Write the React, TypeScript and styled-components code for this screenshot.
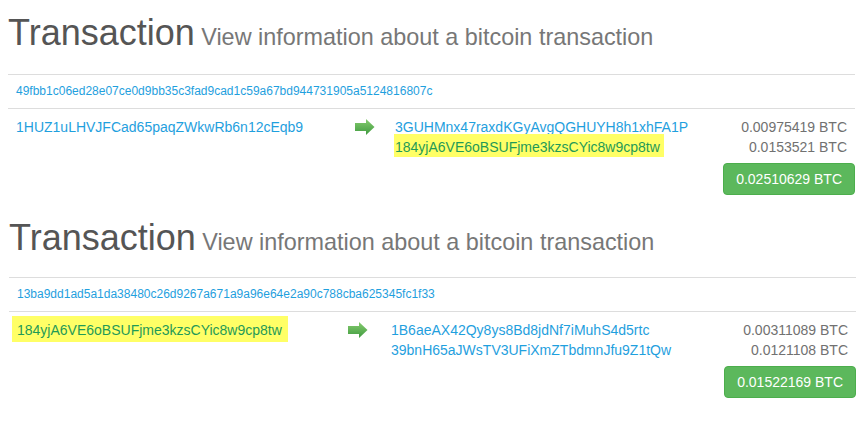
import styled, { createGlobalStyle } from "styled-components";

const GlobalStyle = createGlobalStyle`
  body {
    margin: 0;
    background: #fff;
    font-family: "Liberation Sans", Arial, Helvetica, sans-serif;
    font-size: 14px;
    line-height: 20px;
    color: #333;
  }
`;

const Page = styled.div`
  display: flex;
  flex-direction: column;
  padding-top: 13px;
`;

const Section = styled.section<{ $shift: number; $top: number }>`
  display: flex;
  flex-direction: column;
  width: 847px;
  margin-left: ${(p) => 8 + p.$shift}px;
  margin-top: ${(p) => p.$top}px;
`;

const Title = styled.h1<{ $gap: number }>`
  margin: 0 0 ${(p) => p.$gap}px;
  font-size: 36px;
  line-height: 40px;
  font-weight: 400;
  color: #555;
  white-space: nowrap;
`;

const Sub = styled.small`
  font-size: 65%;
  line-height: 1;
  color: #777;
`;

const HashRow = styled.div`
  border-top: 1px solid #ddd;
  border-bottom: 1px solid #ddd;
  padding: 8px;
  font-size: 12px;
  line-height: 17px;
`;

const Link = styled.a`
  color: #1fa0de;
  text-decoration: none;
  cursor: pointer;
`;

const TxRow = styled.div<{ $cols: string }>`
  display: grid;
  grid-template-columns: ${(p) => p.$cols};
  padding-top: 8px;
`;

const Cell = styled.div`
  padding: 0 8px;
  display: flex;
  flex-direction: column;
`;

const ArrowCell = styled.div`
  padding: 2px 8px 0;
`;

const Outputs = styled.div`
  display: flex;
  justify-content: space-between;
  padding: 0 8px;
`;

const List = styled.div`
  display: flex;
  flex-direction: column;
`;

const Amounts = styled.div`
  display: flex;
  flex-direction: column;
  align-items: flex-end;
  color: #717171;
  white-space: nowrap;
`;

const Mark = styled.span<{ $pad: string; $margin: string }>`
  background: #ffff66;
  color: #1f9a57;
  padding: ${(p) => p.$pad};
  margin: ${(p) => p.$margin};
`;

const Footer = styled.div`
  display: flex;
  justify-content: flex-end;
  padding-top: 6px;
`;

const TotalButton = styled.button`
  height: 32px;
  padding: 0 12px;
  border: 1px solid #4cae4c;
  border-radius: 4px;
  background: #5cb85c;
  color: #fff;
  font-family: inherit;
  font-size: 14px;
  line-height: 30px;
  cursor: pointer;
`;

const Arrow = () => (
  <svg width="20" height="16" viewBox="0 0 20 16">
    <defs>
      <linearGradient id="ag" x1="0" y1="0" x2="0" y2="1">
        <stop offset="0" stopColor="#86cc6f" />
        <stop offset="1" stopColor="#3f9a3f" />
      </linearGradient>
    </defs>
    <polygon points="0,4 11,4 11,0 19.5,8 11,16 11,12 0,12" fill="url(#ag)" />
  </svg>
);

type Addr = { text: string; mark?: { pad: string; margin: string } };

type Tx = {
  hash: string;
  inputs: Addr[];
  outputs: Addr[];
  amounts: string[];
  total: string;
  cols: string;
  shift: number;
  top: number;
  gap: number;
};

const txs: Tx[] = [
  {
    hash: "49fbb1c06ed28e07ce0d9bb35c3fad9cad1c59a67bd944731905a5124816807c",
    inputs: [{ text: "1HUZ1uLHVJFCad65paqZWkwRb6n12cEqb9" }],
    outputs: [
      { text: "3GUHMnx47raxdKGyAvgQGHUYH8h1xhFA1P" },
      {
        text: "184yjA6VE6oBSUFjme3kzsCYic8w9cp8tw",
        mark: { pad: "5px 4px 2px 1px", margin: "0 -4px 0 -1px" },
      },
    ],
    amounts: ["0.00975419 BTC", "0.0153521 BTC"],
    total: "0.02510629 BTC",
    cols: "339px 40px 1fr",
    shift: 0,
    top: 0,
    gap: 21,
  },
  {
    hash: "13ba9dd1ad5a1da38480c26d9267a671a9a96e64e2a90c788cba625345fc1f33",
    inputs: [
      {
        text: "184yjA6VE6oBSUFjme3kzsCYic8w9cp8tw",
        mark: { pad: "6px 6px 4px 5px", margin: "0 -6px 0 -5px" },
      },
    ],
    outputs: [
      { text: "1B6aeAX42Qy8ys8Bd8jdNf7iMuhS4d5rtc" },
      { text: "39bnH65aJWsTV3UFiXmZTbdmnJfu9Z1tQw" },
    ],
    amounts: ["0.00311089 BTC", "0.0121108 BTC"],
    total: "0.01522169 BTC",
    cols: "331px 43px 1fr",
    shift: 1,
    top: 23,
    gap: 19,
  },
];

const Address = ({ a }: { a: Addr }) =>
  a.mark ? (
    <div>
      <Mark $pad={a.mark.pad} $margin={a.mark.margin}>
        {a.text}
      </Mark>
    </div>
  ) : (
    <div>
      <Link>{a.text}</Link>
    </div>
  );

const App = () => {
  return (
    <Page>
      <GlobalStyle />
      {txs.map((tx) => (
        <Section key={tx.hash} $shift={tx.shift} $top={tx.top}>
          <Title $gap={tx.gap}>
            Transaction<Sub> View information about a bitcoin transaction</Sub>
          </Title>
          <HashRow>
            <Link>{tx.hash}</Link>
          </HashRow>
          <TxRow $cols={tx.cols}>
            <Cell>
              {tx.inputs.map((a) => (
                <Address key={a.text} a={a} />
              ))}
            </Cell>
            <ArrowCell>
              <Arrow />
            </ArrowCell>
            <Outputs>
              <List>
                {tx.outputs.map((a) => (
                  <Address key={a.text} a={a} />
                ))}
              </List>
              <Amounts>
                {tx.amounts.map((v) => (
                  <span key={v}>{v}</span>
                ))}
              </Amounts>
            </Outputs>
          </TxRow>
          <Footer>
            <TotalButton>{tx.total}</TotalButton>
          </Footer>
        </Section>
      ))}
    </Page>
  );
};

export default App;
